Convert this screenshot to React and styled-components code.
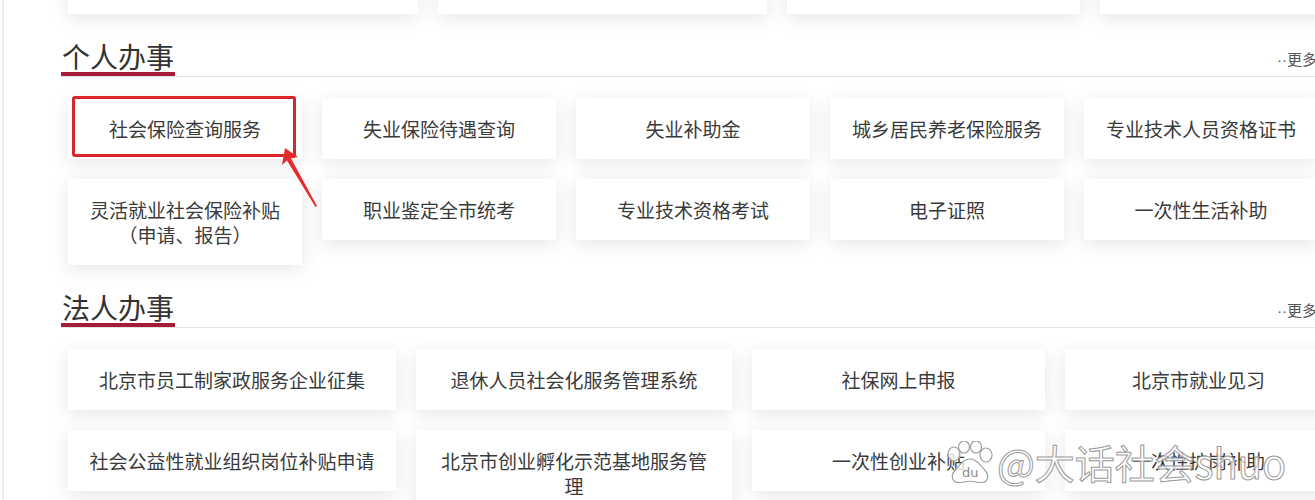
// Libraries
import React from 'react';
import styled, { createGlobalStyle } from 'styled-components';

// Data
const topRow = ['', '', '', ''];

const personal = [
  '社会保险查询服务',
  '失业保险待遇查询',
  '失业补助金',
  '城乡居民养老保险服务',
  '专业技术人员资格证书',
  '灵活就业社会保险补贴（申请、报告）',
  '职业鉴定全市统考',
  '专业技术资格考试',
  '电子证照',
  '一次性生活补助',
];

const corporate = [
  '北京市员工制家政服务企业征集',
  '退休人员社会化服务管理系统',
  '社保网上申报',
  '北京市就业见习',
  '社会公益性就业组织岗位补贴申请',
  '北京市创业孵化示范基地服务管理',
  '一次性创业补贴',
  '一次性扩岗补助',
];

// Styled Components
const GlobalStyle = createGlobalStyle`
  html, body {
    margin: 0;
    padding: 0;
    background: #fff;
    overflow: hidden;
  }
  body {
    font-family: "Noto Sans CJK SC", "Noto Sans", sans-serif;
    color: #333;
  }
`;

const Page = styled.div`
  position: relative;
  width: 1311px;
  height: 500px;
  margin-left: 2px;
  border-left: 2px solid #ededed;
  overflow: hidden;
`;

const Inner = styled.div`
  width: 1256px;
  padding-left: 57px;
`;

const Grid = styled.div`
  display: grid;
  grid-template-columns: ${p => p.$cols};
  column-gap: 20px;
  row-gap: 20px;
  align-items: start;
  margin: ${p => p.$margin || '21px 0 0 7px'};
`;

const Card = styled.div`
  position: relative;
  box-sizing: border-box;
  min-height: ${p => p.$height || '61px'};
  padding: 18px 20px;
  background: #fff;
  box-shadow: 0 4px 18px rgba(0, 0, 0, 0.1);
  font-size: 19px;
  line-height: 25px;
  text-align: center;
  color: #3a3a3a;
`;

const SectionHead = styled.div`
  display: flex;
  align-items: center;
  justify-content: space-between;
  margin-top: 26px;
  border-bottom: 1px solid #e2e2e2;
`;

const Title = styled.h2`
  margin: 0;
  padding: 0 1px;
  font-size: 28px;
  font-weight: 400;
  line-height: 32px;
  color: #333;
  border-bottom: 4px solid #a51c36;
`;

const More = styled.span`
  font-family: "Liberation Sans", "Noto Sans CJK SC", sans-serif;
  font-size: 15px;
  color: #555;
  white-space: nowrap;
`;

const Highlight = styled.div`
  position: absolute;
  left: 4px;
  right: 6px;
  top: -2px;
  bottom: 2px;
  border: 3px solid #d9262a;
  border-radius: 3px;
  pointer-events: none;
`;

const Arrow = styled.svg`
  position: absolute;
  left: 208px;
  top: 50px;
  overflow: visible;
  pointer-events: none;
  z-index: 2;
`;

const Watermark = styled.div`
  position: absolute;
  left: 942px;
  top: 439px;
  display: flex;
  align-items: center;
  gap: 3px;
  pointer-events: none;
  z-index: 5;
`;

const WatermarkText = styled.span`
  font-family: "Noto Sans CJK SC", sans-serif;
  font-size: 40px;
  line-height: 46px;
  font-weight: 400;
  color: rgba(255, 255, 255, 0.78);
  -webkit-text-stroke: 1px #9a9a9a;
`;

// Component
function Section({ title, items, cols, renderFirst }) {
  return (
    <>
      <SectionHead>
        <Title>{title}</Title>
        <More>··更多</More>
      </SectionHead>
      <Grid $cols={cols}>
        {items.map((t, i) => (
          <Card key={i}>
            {t}
            {i === 0 && renderFirst}
          </Card>
        ))}
      </Grid>
    </>
  );
}

const PawLogo = () => (
  <svg width="48" height="42" viewBox="0 0 48 42">
    <g fill="rgba(255,255,255,0.8)" stroke="#a0a0a0" strokeWidth="1.2">
      <ellipse cx="8" cy="13" rx="6" ry="7" />
      <ellipse cx="18" cy="6" rx="5.5" ry="6" />
      <ellipse cx="30" cy="6" rx="5.5" ry="6" />
      <ellipse cx="40" cy="14" rx="6" ry="7" />
      <path d="M24 18c-6 0-9 5-14 10-4 4-5 9-2 12 2 2 7 2 10 1 4-1 8-1 12 0 3 1 8 1 10-1 3-3 2-8-2-12-5-5-8-10-14-10z" />
    </g>
    <text x="16" y="36" fontSize="13" fontFamily="DejaVu Sans, sans-serif" fill="#8a8a8a">du</text>
  </svg>
);

export default function App() {
  return (
    <>
      <GlobalStyle />
      <Page>
        <Inner>
          <Grid $cols="350px 329px 293px 260px" $margin="-48px 0 0 7px">
            {topRow.map((t, i) => (
              <Card key={i} $height="62px" />
            ))}
          </Grid>

          <Section
            title="个人办事"
            items={personal}
            cols="repeat(5, 234px)"
            renderFirst={
              <>
                <Highlight />
                <Arrow width="44" height="62" viewBox="0 0 44 62">
                  <polygon
                    points="9,0 22,9 15,10.5 41,58 39.5,59 11,12.5 6,17"
                    fill="#e52b2b"
                  />
                </Arrow>
              </>
            }
          />

          <Section
            title="法人办事"
            items={corporate}
            cols="328px 316px 293px 267px"
          />
        </Inner>

        <Watermark>
          <PawLogo />
          <WatermarkText>@大话社会shuo</WatermarkText>
        </Watermark>
      </Page>
    </>
  );
}
